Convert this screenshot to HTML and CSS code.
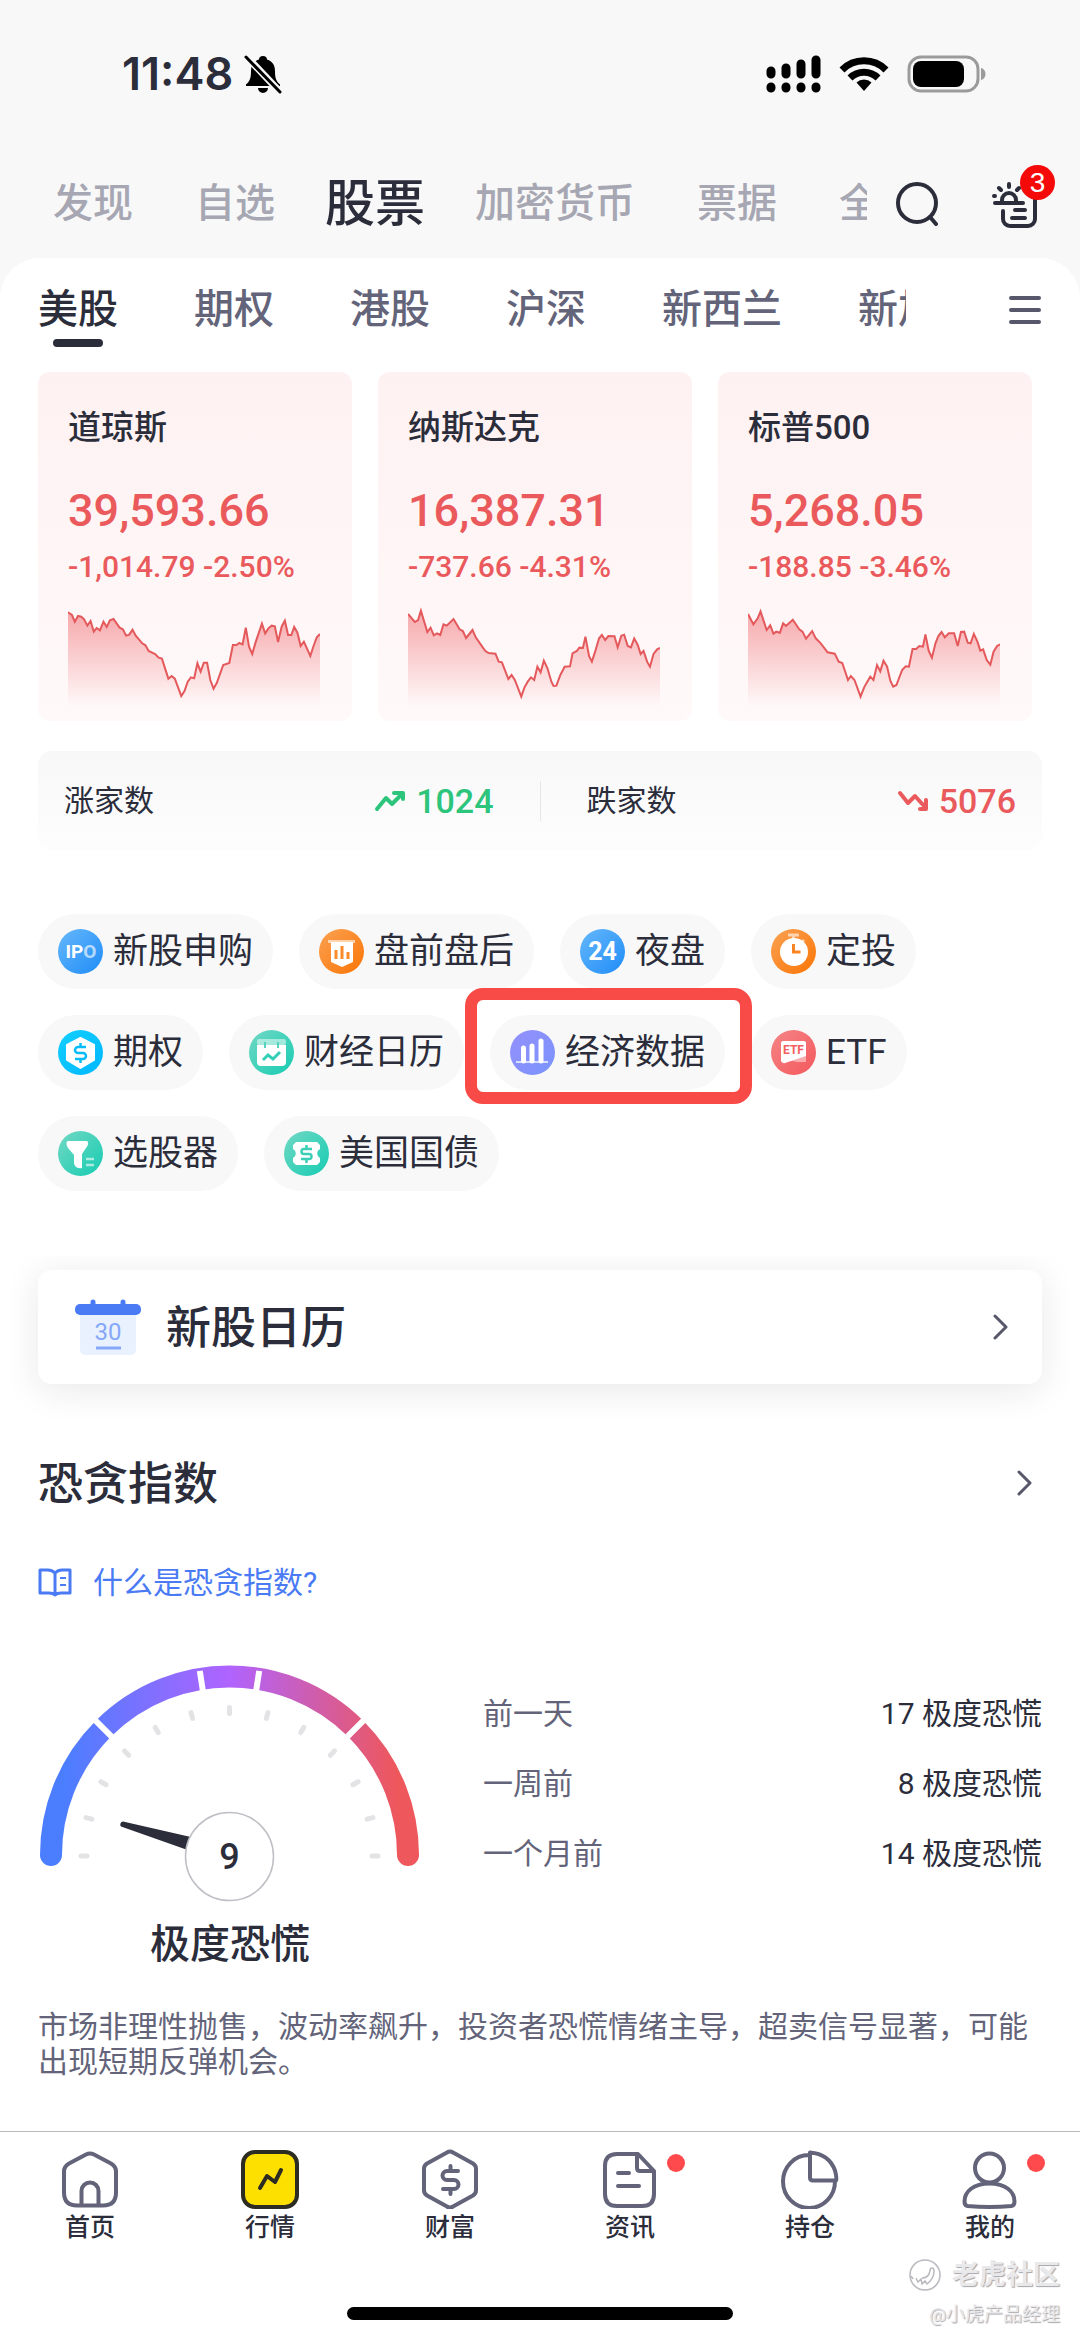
FILE: index.html
```html
<!DOCTYPE html>
<html lang="zh-CN">
<head>
<meta charset="utf-8">
<meta name="viewport" content="width=device-width, initial-scale=1">
<title>行情 - 股票</title>
<link rel="stylesheet" href="styles.css">
</head>
<body>
<svg class="defs" aria-hidden="true">
  <defs>
    <linearGradient id="spark" x1="0" y1="0" x2="0" y2="1"><stop offset="0" stop-color="#f6a9ac"/><stop offset="1" stop-color="#f6a9ac" stop-opacity="0"/></linearGradient>
    <linearGradient id="blue" x1="0" y1="0" x2="1" y2="1"><stop offset="0" stop-color="#66b8fb"/><stop offset="1" stop-color="#1f8cf7"/></linearGradient>
    <linearGradient id="orange" x1="0" y1="0" x2="1" y2="1"><stop offset="0" stop-color="#fba253"/><stop offset="1" stop-color="#fa7505"/></linearGradient>
    <linearGradient id="cyan" x1="0" y1="0" x2="1" y2="1"><stop offset="0" stop-color="#12d0ff"/><stop offset="1" stop-color="#00b6ff"/></linearGradient>
    <linearGradient id="teal" x1="0" y1="0" x2="1" y2="1"><stop offset="0" stop-color="#72d8c4"/><stop offset="1" stop-color="#16ccb2"/></linearGradient>
    <linearGradient id="violet" x1="0" y1="0" x2="1" y2="1"><stop offset="0" stop-color="#9490fb"/><stop offset="1" stop-color="#7a93fc"/></linearGradient>
    <linearGradient id="coral" x1="0" y1="0" x2="1" y2="1"><stop offset="0" stop-color="#f58587"/><stop offset="1" stop-color="#f4595c"/></linearGradient>
    <linearGradient id="arc" gradientUnits="userSpaceOnUse" x1="2" y1="0" x2="381" y2="0"><stop offset=".06" stop-color="#4a7eff"/><stop offset=".5" stop-color="#b063ff"/><stop offset=".94" stop-color="#ee575c"/></linearGradient>
  </defs>
</svg>

<header class="top">
  <div class="status">
    <div class="status-side">
      <time class="clock">11:48</time>
      <svg width="40" height="40" viewBox="0 0 40 40"><path d="M20 2c2.600 0 4 1.500 4 3.500 5.500 1.600 8 6 8 11.500 0 7 1 10 5 13.500V32H3v-1.500C7 27 8 24 8 17c0-5.500 2.500-9.900 8-11.500C16 3.500 17.400 2 20 2zM15 34h10a5 5 0 0 1-10 0z"/><path d="M3 2l34 36" stroke="#f8f8f8" stroke-width="7"/><path d="M3 3l34 35" stroke="#000" stroke-width="3" stroke-linecap="round"/></svg>
    </div>
    <div class="status-side status-right">
      <svg width="56" height="38" viewBox="0 0 56 38"><g stroke="#000" stroke-width="9" stroke-linecap="round"><path d="M6 16v3M21 13v6M36 9v10M51 5v14"/><path d="M6 32v1M21 32v1M36 32v1M51 32v1"/></g></svg>
      <svg width="50" height="36" viewBox="0 0 50 36" fill="none" stroke="#000" stroke-width="7"><path d="M3 14a31 31 0 0 1 44 0M11 22a20 20 0 0 1 28 0"/><path d="M25 35l-7.500-8.500a11 11 0 0 1 15 0z" fill="#000" stroke="none"/></svg>
      <svg width="80" height="38" viewBox="0 0 80 38"><rect x="2" y="2" width="69" height="34" rx="12" fill="none" stroke="#9b9b9b" stroke-width="3"/><rect x="6" y="6" width="51" height="26" rx="8"/><path d="M74 13c6 1 6 11 0 12z" fill="#9b9b9b"/></svg>
    </div>
  </div>
  <div class="channel-bar">
    <nav class="channels">
      <a href="#">发现</a><a href="#">自选</a><a href="#" class="current">股票</a><a href="#">加密货币</a><a href="#">票据</a><a href="#">全部</a>
    </nav>
    <div class="actions">
      <button aria-label="搜索"><svg width="44" height="44" viewBox="0 0 44 44" fill="none" stroke="#2b2d3b" stroke-width="4" stroke-linecap="round"><circle cx="22" cy="21" r="19"/><path d="M35 35l6 7"/></svg></button>
      <button class="inbox" aria-label="消息"><svg width="50" height="50" viewBox="0 0 50 50" fill="none" stroke="#2b2d3b" stroke-width="4" stroke-linecap="round"><path d="M5 24h28M12 23v-2a7 7 0 0 1 14 0v2M19 5v3M9 9l2 2M29 9l-2 2M4 17h1M13 32v8a7 7 0 0 0 7 7h18a7 7 0 0 0 7-7V18"/><path d="M25 31h10M22 39h13"/></svg><span class="badge">3</span></button>
    </div>
  </div>
</header>

<main class="panel">
  <div class="market-bar">
    <nav class="markets">
      <a href="#" class="current">美股</a><a href="#">期权</a><a href="#">港股</a><a href="#">沪深</a><a href="#">新西兰</a><a href="#">新加坡</a>
    </nav>
    <button aria-label="更多市场"><svg width="35" height="30" viewBox="0 0 35 30" stroke="#56576b" stroke-width="4" stroke-linecap="round"><path d="M4 3h28M4 15h28M4 27h28"/></svg></button>
  </div>

  <section class="indices">
    <article class="index">
      <h2>道琼斯</h2>
      <strong>39,593.66</strong>
      <p>-1,014.79 -2.50%</p>
      <svg viewBox="0 720 703 330" preserveAspectRatio="none"><path fill="url(#spark)" d="M0 757L11 765 19 785 28 768 37 770 45 778 54 797 63 783 72 815 80 804 89 811 99 785 108 801 117 781 127 777 144 803 153 808 162 827 171 824 180 809 189 827 207 850 216 856 225 873 243 882 253 893 262 896 280 956 289 948 298 956 316 1008 325 993 334 965 343 952 352 955 361 910 370 935 379 908 388 908 397 960 406 986 415 969 433 915 450 909 460 855 470 855 478 849 487 853 496 803 505 860 514 882 523 848 541 791 550 820 559 805 568 797 577 799 586 846 596 800 605 782 614 825 623 825 631 801 640 818 649 858 658 845 676 888 685 858 694 832 703 822V1040H0z"/><polyline points="0 757 11 765 19 785 28 768 37 770 45 778 54 797 63 783 72 815 80 804 89 811 99 785 108 801 117 781 127 777 144 803 153 808 162 827 171 824 180 809 189 827 207 850 216 856 225 873 243 882 253 893 262 896 280 956 289 948 298 956 316 1008 325 993 334 965 343 952 352 955 361 910 370 935 379 908 388 908 397 960 406 986 415 969 433 915 450 909 460 855 470 855 478 849 487 853 496 803 505 860 514 882 523 848 541 791 550 820 559 805 568 797 577 799 586 846 596 800 605 782 614 825 623 825 631 801 640 818 649 858 658 845 676 888 685 858 694 832 703 822"/></svg>
    </article>
    <article class="index">
      <h2>纳斯达克</h2>
      <strong>16,387.31</strong>
      <p>-737.66 -4.31%</p>
      <svg viewBox="0 720 703 330" preserveAspectRatio="none"><path fill="url(#spark)" d="M0 762L19 786 28 780 36 752 54 816 63 803 72 826 81 820 90 825 99 793 108 797 127 777 144 808 153 813 162 834 180 810 189 832 207 860 216 873 225 879 244 881 253 905 262 907 280 957 289 945 298 960 316 1010 325 982 334 965 343 952 352 960 361 920 370 937 379 902 389 925 400 965 406 978 414 977 425 945 437 920 452 919 459 880 471 873 478 863 488 864 495 830 505 888 513 905 522 875 533 835 541 825 550 840 559 828 576 829 585 862 595 827 603 824 613 858 622 862 631 835 641 855 649 882 657 873 667 905 675 920 685 882 695 868 703 864V1040H0z"/><polyline points="0 762 19 786 28 780 36 752 54 816 63 803 72 826 81 820 90 825 99 793 108 797 127 777 144 808 153 813 162 834 180 810 189 832 207 860 216 873 225 879 244 881 253 905 262 907 280 957 289 945 298 960 316 1010 325 982 334 965 343 952 352 960 361 920 370 937 379 902 389 925 400 965 406 978 414 977 425 945 437 920 452 919 459 880 471 873 478 863 488 864 495 830 505 888 513 905 522 875 533 835 541 825 550 840 559 828 576 829 585 862 595 827 603 824 613 858 622 862 631 835 641 855 649 882 657 873 667 905 675 920 685 882 695 868 703 864"/></svg>
    </article>
    <article class="index">
      <h2>标普500</h2>
      <strong>5,268.05</strong>
      <p>-188.85 -3.46%</p>
      <svg viewBox="0 720 703 330" preserveAspectRatio="none"><path fill="url(#spark)" d="M0 762L15 793 27 775 35 754 52 810 62 796 71 821 79 815 89 818 98 790 106 798 125 779 143 808 152 815 162 836 179 813 189 835 203 850 222 877 242 881 253 905 263 909 279 960 287 948 297 960 314 1010 324 982 341 950 350 960 360 915 369 934 378 902 388 920 397 962 405 980 414 975 430 930 440 919 449 920 459 867 469 867 478 858 488 860 495 823 504 872 513 893 523 850 531 828 540 816 549 832 560 820 575 820 585 858 594 816 603 815 613 848 621 850 630 822 640 845 648 872 656 868 666 900 676 914 685 875 695 858 703 853V1040H0z"/><polyline points="0 762 15 793 27 775 35 754 52 810 62 796 71 821 79 815 89 818 98 790 106 798 125 779 143 808 152 815 162 836 179 813 189 835 203 850 222 877 242 881 253 905 263 909 279 960 287 948 297 960 314 1010 324 982 341 950 350 960 360 915 369 934 378 902 388 920 397 962 405 980 414 975 430 930 440 919 449 920 459 867 469 867 478 858 488 860 495 823 504 872 513 893 523 850 531 828 540 816 549 832 560 820 575 820 585 858 594 816 603 815 613 848 621 850 630 822 640 845 648 872 656 868 666 900 676 914 685 875 695 858 703 853"/></svg>
    </article>
  </section>

  <section class="breadth">
    <div class="breadth-item">
      <span>涨家数</span>
      <b class="up"><svg width="32" height="24" viewBox="0 0 32 24" fill="none" stroke="currentColor" stroke-width="4" stroke-linecap="round"><path d="M3 20l9-11 6 6L28 5M20 4h9v6" stroke-linejoin="round"/></svg>1024</b>
    </div>
    <div class="breadth-item">
      <span>跌家数</span>
      <b class="down"><svg width="32" height="24" viewBox="0 0 32 24" fill="none" stroke="currentColor" stroke-width="4" stroke-linecap="round"><path d="M3 4l8 10 7-7 10 11M29 11v9h-6" stroke-linejoin="round"/></svg>5076</b>
    </div>
  </section>

  <nav class="chips">
    <a class="chip" href="#"><svg viewBox="0 0 45 45"><circle cx="22.500" cy="22.500" r="22.500" fill="url(#blue)"/><text x="23" y="29" text-anchor="middle" font-size="19" font-weight="700" fill="#fff">IP<tspan fill-opacity=".65">O</tspan></text></svg>新股申购</a>
    <a class="chip" href="#"><svg viewBox="0 0 45 45"><circle cx="22.500" cy="22.500" r="22.500" fill="url(#orange)"/><path d="M9 11h27v3H9z" fill="#fff" opacity=".6"/><path d="M12 13h22v20l-11 5-11-5z" fill="#fff"/><path d="M17 21v9M23 17v13M29 23v7" stroke="#fb8a2b" stroke-width="3"/></svg>盘前盘后</a>
    <a class="chip" href="#"><svg viewBox="0 0 45 45"><circle cx="22.500" cy="22.500" r="22.500" fill="url(#blue)"/><text x="22.500" y="31" text-anchor="middle" font-size="25" font-weight="700" fill="#fff">24</text></svg>夜盘</a>
    <a class="chip" href="#"><svg viewBox="0 0 45 45"><circle cx="22.500" cy="22.500" r="22.500" fill="url(#orange)"/><path d="M17 6h11M22.500 6v4M31 11l2 2" stroke="#fff" stroke-width="3" opacity=".6"/><circle cx="23" cy="23" r="14" fill="#fff"/><path d="M22.500 15v8h7" fill="none" stroke="#fb8423" stroke-width="3"/></svg>定投</a>
    <a class="chip" href="#"><svg viewBox="0 0 45 45"><circle cx="22.500" cy="22.500" r="22.500" fill="url(#cyan)"/><path d="M22.500 8L36 15v15l-13.500 8L9 30V15z" fill="#fff" stroke="#fff" stroke-width="2" stroke-linejoin="round"/><path d="M28 17h-8a3 3 0 0 0 0 6h5a3 3 0 0 1 0 6h-8M22.500 13v4M22.500 29v4" fill="none" stroke="#08bcf8" stroke-width="2.500"/></svg>期权</a>
    <a class="chip" href="#"><svg viewBox="0 0 45 45"><circle cx="22.500" cy="22.500" r="22.500" fill="url(#teal)"/><rect x="8" y="9" width="29" height="6" rx="2" fill="#fff" opacity=".5"/><path d="M8 15h29v17a4 4 0 0 1-4 4H12a4 4 0 0 1-4-4z" fill="#fff"/><path d="M16 12v6M29 12v6" stroke="#56d2bd" stroke-width="2"/><path d="M14 30l5-5 5 4 7-7" fill="none" stroke="#35cfb7" stroke-width="3"/></svg>财经日历</a>
    <span class="spotlight"><a class="chip" href="#"><svg viewBox="0 0 45 45"><circle cx="22.500" cy="22.500" r="22.500" fill="url(#violet)"/><path d="M6 32h32" stroke="#fff" stroke-width="2" opacity=".7"/><path d="M13.500 31V18M22 31V16M31 31V11" stroke="#fff" stroke-width="5" stroke-linecap="round"/></svg>经济数据</a></span>
    <a class="chip" href="#"><svg viewBox="0 0 45 45"><circle cx="22.500" cy="22.500" r="22.500" fill="url(#coral)"/><path d="M10 28l25-6v10h-9z" fill="#fff" opacity=".45"/><path d="M12 11h21a2 2 0 0 1 2 2v13l-21 7a3 3 0 0 1-4-3V13a2 2 0 0 1 2-2z" fill="#fff"/><text x="22.500" y="24" text-anchor="middle" font-size="12" font-weight="700" fill="#f4605f">ETF</text></svg>ETF</a>
    <a class="chip" href="#"><svg viewBox="0 0 45 45"><circle cx="22.500" cy="22.500" r="22.500" fill="url(#teal)"/><path d="M10 10h19c2 1 1 5-1 7l-4 6v14c-5 1-8-2-8-6v-7l-6-7c-2-3-2-7 0-7z" fill="#fff"/><path d="M28 28h8M28 34h8" stroke="#fff" stroke-width="2.500" opacity=".6"/></svg>选股器</a>
    <a class="chip" href="#"><svg viewBox="0 0 45 45"><circle cx="22.500" cy="22.500" r="22.500" fill="url(#teal)"/><path d="M12 11h21l3 3v4a5 5 0 0 0 0 9v4l-3 3H12l-3-3v-4a5 5 0 0 0 0-9v-4z" fill="#fff"/><path d="M28 18h-8a2.500 2.500 0 0 0 0 5h5a2.500 2.500 0 0 1 0 5h-8M22.500 14v4M22.500 28v4" fill="none" stroke="#3ccfb8" stroke-width="2.500"/></svg>美国国债</a>
  </nav>

  <section class="calendar">
    <a class="calendar-card" href="#">
      <svg width="66" height="56" viewBox="0 0 66 56"><path d="M5 10h56v41a5 5 0 0 1-5 5H10a5 5 0 0 1-5-5z" fill="#eaf1fe"/><rect y="5" width="66" height="11" rx="5" fill="#4a7bf5"/><path d="M18 3v6M48 3v6" stroke="#4a7bf5" stroke-width="5" stroke-linecap="round"/><text x="33" y="41" text-anchor="middle" font-size="24" fill="#85a8f8">30</text><path d="M21 49h25" stroke="#85a8f8" stroke-width="3"/></svg>
      <h2>新股日历</h2>
      <svg class="chevron" width="16" height="30" viewBox="0 0 16 30"><path d="M3 4l11 11L3 26"/></svg>
    </a>
  </section>

  <section class="fear">
    <header class="fear-head"><h2>恐贪指数</h2><svg class="chevron" width="16" height="30" viewBox="0 0 16 30"><path d="M3 4l11 11L3 26"/></svg></header>
    <a class="help" href="#"><svg width="34" height="30" viewBox="0 0 34 30" fill="none" stroke="#4a7bf5" stroke-width="3" stroke-linejoin="round"><path d="M17 5c-2-2-4-3-7-3H2v23h9c3 0 5 1 6 2 1-1 3-2 6-2h9V2h-8c-3 0-5 1-7 3zM17 5v22"/><path d="M22 10h6M22 17h6" stroke-width="2"/></svg>什么是恐贪指数?</a>
    <div class="fear-body">
      <figure class="gauge">
        <svg viewBox="0 0 384 245">
          <path d="M13 195A178.500 178.500 0 0 1 370 195" fill="none" stroke="url(#arc)" stroke-width="22" stroke-linecap="round"/>
          <path d="M74.600 77.600l-20-20M165.800 36.900l-4-26M217.200 36.900l4-26M308.400 77.600l20-20" stroke="#fff" stroke-width="6"/>
          <g stroke="#e3e3e6" stroke-width="5" stroke-linecap="round">
            <path id="tick" d="M43 196h6"/>
            <use href="#tick" transform="rotate(15 191.500 196)"/><use href="#tick" transform="rotate(30 191.500 196)"/><use href="#tick" transform="rotate(45 191.500 196)"/><use href="#tick" transform="rotate(60 191.500 196)"/><use href="#tick" transform="rotate(75 191.500 196)"/><use href="#tick" transform="rotate(90 191.500 196)"/><use href="#tick" transform="rotate(105 191.500 196)"/><use href="#tick" transform="rotate(120 191.500 196)"/><use href="#tick" transform="rotate(135 191.500 196)"/><use href="#tick" transform="rotate(150 191.500 196)"/><use href="#tick" transform="rotate(165 191.500 196)"/><use href="#tick" transform="rotate(180 191.500 196)"/>
          </g>
          <path d="M85 161.500l70 16-4 13-68-24a3 3 0 0 1 2-5z" fill="#2b2d3b"/>
          <circle cx="191.500" cy="196.500" r="44" fill="#fff" stroke="#bfbfc6" stroke-width="1.500"/>
          <text x="191.500" y="209" text-anchor="middle" font-size="36" font-weight="500" fill="#2b2d3b">9</text>
        </svg>
        <figcaption>极度恐慌</figcaption>
      </figure>
      <dl class="history">
        <div><dt>前一天</dt><dd>17 极度恐慌</dd></div>
        <div><dt>一周前</dt><dd>8 极度恐慌</dd></div>
        <div><dt>一个月前</dt><dd>14 极度恐慌</dd></div>
      </dl>
    </div>
    <p class="note">市场非理性抛售，波动率飙升，投资者恐慌情绪主导，超卖信号显著，可能出现短期反弹机会。</p>
  </section>
</main>

<footer class="dock">
  <nav class="tabs">
    <a href="#"><svg viewBox="0 0 60 60"><path d="M26 5.500q4-2 8 0l17 9q5 3 5 8v21q0 13-13 13H17Q4 56.500 4 43.500v-21q0-5 5-8zM21.500 56V42a8.500 8.500 0 0 1 17 0v14"/></svg>首页</a>
    <a href="#"><svg viewBox="0 0 60 60"><rect x="3" y="3" width="54" height="55" rx="12" fill="#fde000" stroke="#2d2c22"/><path d="M20 39l7-12 8 6 6-12" stroke="#2d2c22"/></svg>行情</a>
    <a href="#"><svg viewBox="0 0 60 60"><path d="M27 3.500q3-2 6 0l20 11q3 2 3 5v22q0 3-3 5l-20 11q-3 2-6 0l-20-11q-3-2-3-5v-22q0-3 3-5zM38 22H27a4.500 4.500 0 0 0 0 9h7a4.500 4.500 0 0 1 0 9H23M30.500 17v5M30.500 40v5"/></svg>财富</a>
    <a href="#" class="unread"><svg viewBox="0 0 60 60"><path d="M38 5H17Q5 5 5 17v28q0 12 12 12h25q12 0 12-12V22zM37 5v14q0 3 3 3h14M18 24h11M18 37h21"/></svg>资讯</a>
    <a href="#"><svg viewBox="0 0 60 60"><path d="M29 6a26 26.500 0 1 0 26 26M30 3.500v25q0 3 3 3h23q1-3-1-10Q49 5 30 3.500z"/></svg>持仓</a>
    <a href="#" class="unread"><svg viewBox="0 0 60 60"><circle cx="29.500" cy="19" r="14.500"/><path d="M29.500 34.500c16 0 25 8 25 18q0 4-3 4.500-22 2-44 0-3-.5-3-4.500c0-10 9-18 25-18z"/></svg>我的</a>
  </nav>
  <div class="home-bar"></div>
  <aside class="watermark">
    <span class="brand"><svg width="32" height="32" viewBox="0 0 32 32" fill="none" stroke="#b9b9bf" stroke-width="1.500"><circle cx="16" cy="16" r="15"/><path d="M7 19l2 4 3-3 1 5 3-3 2 3c4-3 7-8 7-13 0-4-4-4-4 0-1 5-4 7-8 7M2 17l2 3"/></svg>老虎社区</span>
    <span class="author">@小虎产品经理</span>
  </aside>
</footer>
</body>
</html>
```

FILE: styles.css
```css
:root {
  --ink: #2b2d3b;
  --slate: #63647a;
  --mute: #a6a7b3;
  --red: #ea5a5c;
  --green: #2dc47c;
  --blue: #4a7bf5;
  --edge: 38px;
}

* { box-sizing: border-box; margin: 0; padding: 0; }

body {
  display: flex;
  flex-direction: column;
  min-height: 100vh;
  background: #f8f8f8;
  color: var(--ink);
  font-family: Roboto, "Noto Sans CJK SC", sans-serif;
  font-size: 30px;
  line-height: 40px;
}

a { color: inherit; text-decoration: none; white-space: nowrap; }
button { display: flex; border: 0; background: none; cursor: pointer; }
svg { display: block; flex: none; }
h2 { font-weight: 500; }
.defs { position: absolute; width: 0; height: 0; }

/* status bar */
.status {
  display: flex;
  justify-content: space-between;
  align-items: center;
  height: 148px;
  padding: 0 93px 0 122px;
}
.status-side { display: flex; align-items: center; gap: 10px; }
.status-right { gap: 18px; }
.clock { font: 600 45px/50px Inter, sans-serif; }

/* channels */
.channel-bar {
  display: flex;
  align-items: center;
  height: 110px;
  padding: 2px 40px 0 22px;
}
.channels { display: flex; flex: 1; align-items: center; min-width: 0; overflow: hidden; }
.channels a { padding: 0 31px; color: var(--mute); font-size: 40px; font-weight: 500; line-height: 60px; }
.channels .current { padding: 0 19px; color: var(--ink); font-size: 50px; }
.actions { display: flex; align-items: center; gap: 51px; margin-left: 28px; }
.inbox { position: relative; }
.badge {
  position: absolute;
  top: -14px;
  left: 30px;
  width: 35px;
  height: 35px;
  border-radius: 50%;
  background: #f50a0a;
  color: #fff;
  font-size: 28px;
  line-height: 35px;
  text-align: center;
}

/* market tabs */
.panel { flex: 1; border-radius: 40px 40px 0 0; background: #fff; }
.market-bar { display: flex; align-items: center; height: 104px; padding: 0 var(--edge); }
.markets { display: flex; flex: 1; gap: 76px; min-width: 0; overflow: hidden; }
.markets a { position: relative; color: var(--slate); font-size: 40px; font-weight: 500; line-height: 80px; }
.markets .current { color: var(--ink); }
.markets .current::after {
  content: "";
  position: absolute;
  bottom: 3px;
  left: 15px;
  width: 50px;
  height: 8px;
  border-radius: 4px;
  background: var(--ink);
}
.market-bar button { margin-left: 101px; }

/* index cards */
.indices {
  display: grid;
  grid-template-columns: repeat(3, 1fr);
  gap: 26px;
  margin-top: 10px;
  padding: 0 48px 0 var(--edge);
}
.index {
  display: flex;
  flex-direction: column;
  padding: 36px 32px 11px 30px;
  border-radius: 12px;
  background: linear-gradient(#fef1f2, #fff9f9);
}
.index h2 { font-size: 33px; }
.index strong { margin-top: 38px; color: var(--red); font-size: 45px; font-weight: 500; line-height: 50px; }
.index p { margin-top: 11px; color: var(--red); font-weight: 500; white-space: nowrap; }
.index svg { width: 100%; height: 110px; margin-top: 13px; }
.index polyline { fill: none; stroke: #e4595c; stroke-width: 2px; vector-effect: non-scaling-stroke; }

/* advancers and decliners */
.breadth {
  display: flex;
  align-items: center;
  height: 100px;
  margin: 30px var(--edge) 0;
  border-radius: 14px;
  background: linear-gradient(#f8f8f9, #fdfdfe);
}
.breadth-item { display: flex; flex: 1; justify-content: space-between; padding: 0 26px 0 46px; }
.breadth-item:first-child { padding: 0 46px 0 26px; border-right: 1px solid #e6e6ea; }
.breadth b { display: flex; align-items: center; gap: 10px; font-size: 34px; font-weight: 500; }
.up { color: var(--green); }
.down { color: var(--red); }

/* shortcuts */
.chips { display: flex; flex-wrap: wrap; gap: 26px; margin: 63px var(--edge) 0; padding-right: 80px; }
.chip {
  display: flex;
  align-items: center;
  gap: 10px;
  height: 75px;
  padding: 0 20px;
  border-radius: 38px;
  background: #f8f8f8;
  font-size: 35px;
}
.chip svg { width: 45px; height: 45px; }
.spotlight { position: relative; z-index: 1; }
.spotlight::after {
  content: "";
  position: absolute;
  inset: -27px -27px -14px -25px;
  border: 12px solid #f84b48;
  border-radius: 18px;
}

/* calendar card */
.calendar { margin-top: 65px; padding: 14px var(--edge) 44px; overflow: hidden; }
.calendar-card {
  display: flex;
  align-items: center;
  gap: 25px;
  height: 114px;
  padding: 0 34px 0 37px;
  border-radius: 14px;
  background: #fff;
  box-shadow: 0 6px 36px rgba(30, 30, 50, .1);
}
.calendar-card h2, .fear-head h2 { flex: 1; padding-top: 4px; font-size: 45px; line-height: 56px; }
.chevron { fill: none; stroke: #56576b; stroke-width: 3px; stroke-linecap: round; stroke-linejoin: round; }

/* fear and greed */
.fear { padding: 25px var(--edge) 52px; }
.fear-head { display: flex; align-items: center; padding-right: 10px; }
.help { display: flex; align-items: center; gap: 21px; width: fit-content; margin-top: 50px; color: var(--blue); }
.fear-body { display: flex; gap: 61px; margin-top: 57px; }
.gauge { flex: none; width: 384px; }
.gauge figcaption { margin-top: 15px; font-size: 40px; font-weight: 500; line-height: 50px; text-align: center; }
.history { display: flex; flex: 1; flex-direction: column; gap: 30px; padding-top: 34px; }
.history div { display: flex; justify-content: space-between; }
.history dt { color: var(--slate); }
.note { margin-top: 39px; color: var(--slate); line-height: 35px; }

/* bottom dock */
.dock { position: relative; padding-bottom: 20px; border-top: 1px solid #bcbcbc; background: #fff; }
.tabs { display: grid; grid-template-columns: repeat(6, 1fr); padding-top: 17px; }
.tabs a {
  position: relative;
  display: flex;
  flex-direction: column;
  align-items: center;
  gap: 2px;
  font-size: 25px;
  font-weight: 500;
  line-height: 34px;
}
.tabs svg { width: 60px; height: 60px; fill: none; stroke: #63647a; stroke-width: 4px; stroke-linecap: round; stroke-linejoin: round; }
.unread::after {
  content: "";
  position: absolute;
  top: 5px;
  left: calc(50% + 37px);
  width: 18px;
  height: 18px;
  border-radius: 50%;
  background: #fe4a4c;
}
.home-bar { width: 386px; height: 13px; margin: 62px auto 0; border-radius: 7px; background: #000; }
.watermark {
  position: absolute;
  right: 20px;
  bottom: 12px;
  display: flex;
  flex-direction: column;
  align-items: flex-end;
  gap: 10px;
  color: #e9e9ec;
  text-shadow: 1px 1px 1px #a5a5aa;
}
.brand { display: flex; align-items: center; gap: 11px; font-size: 27px; font-weight: 700; line-height: 34px; }
.author { font-size: 19px; line-height: 26px; }
```
